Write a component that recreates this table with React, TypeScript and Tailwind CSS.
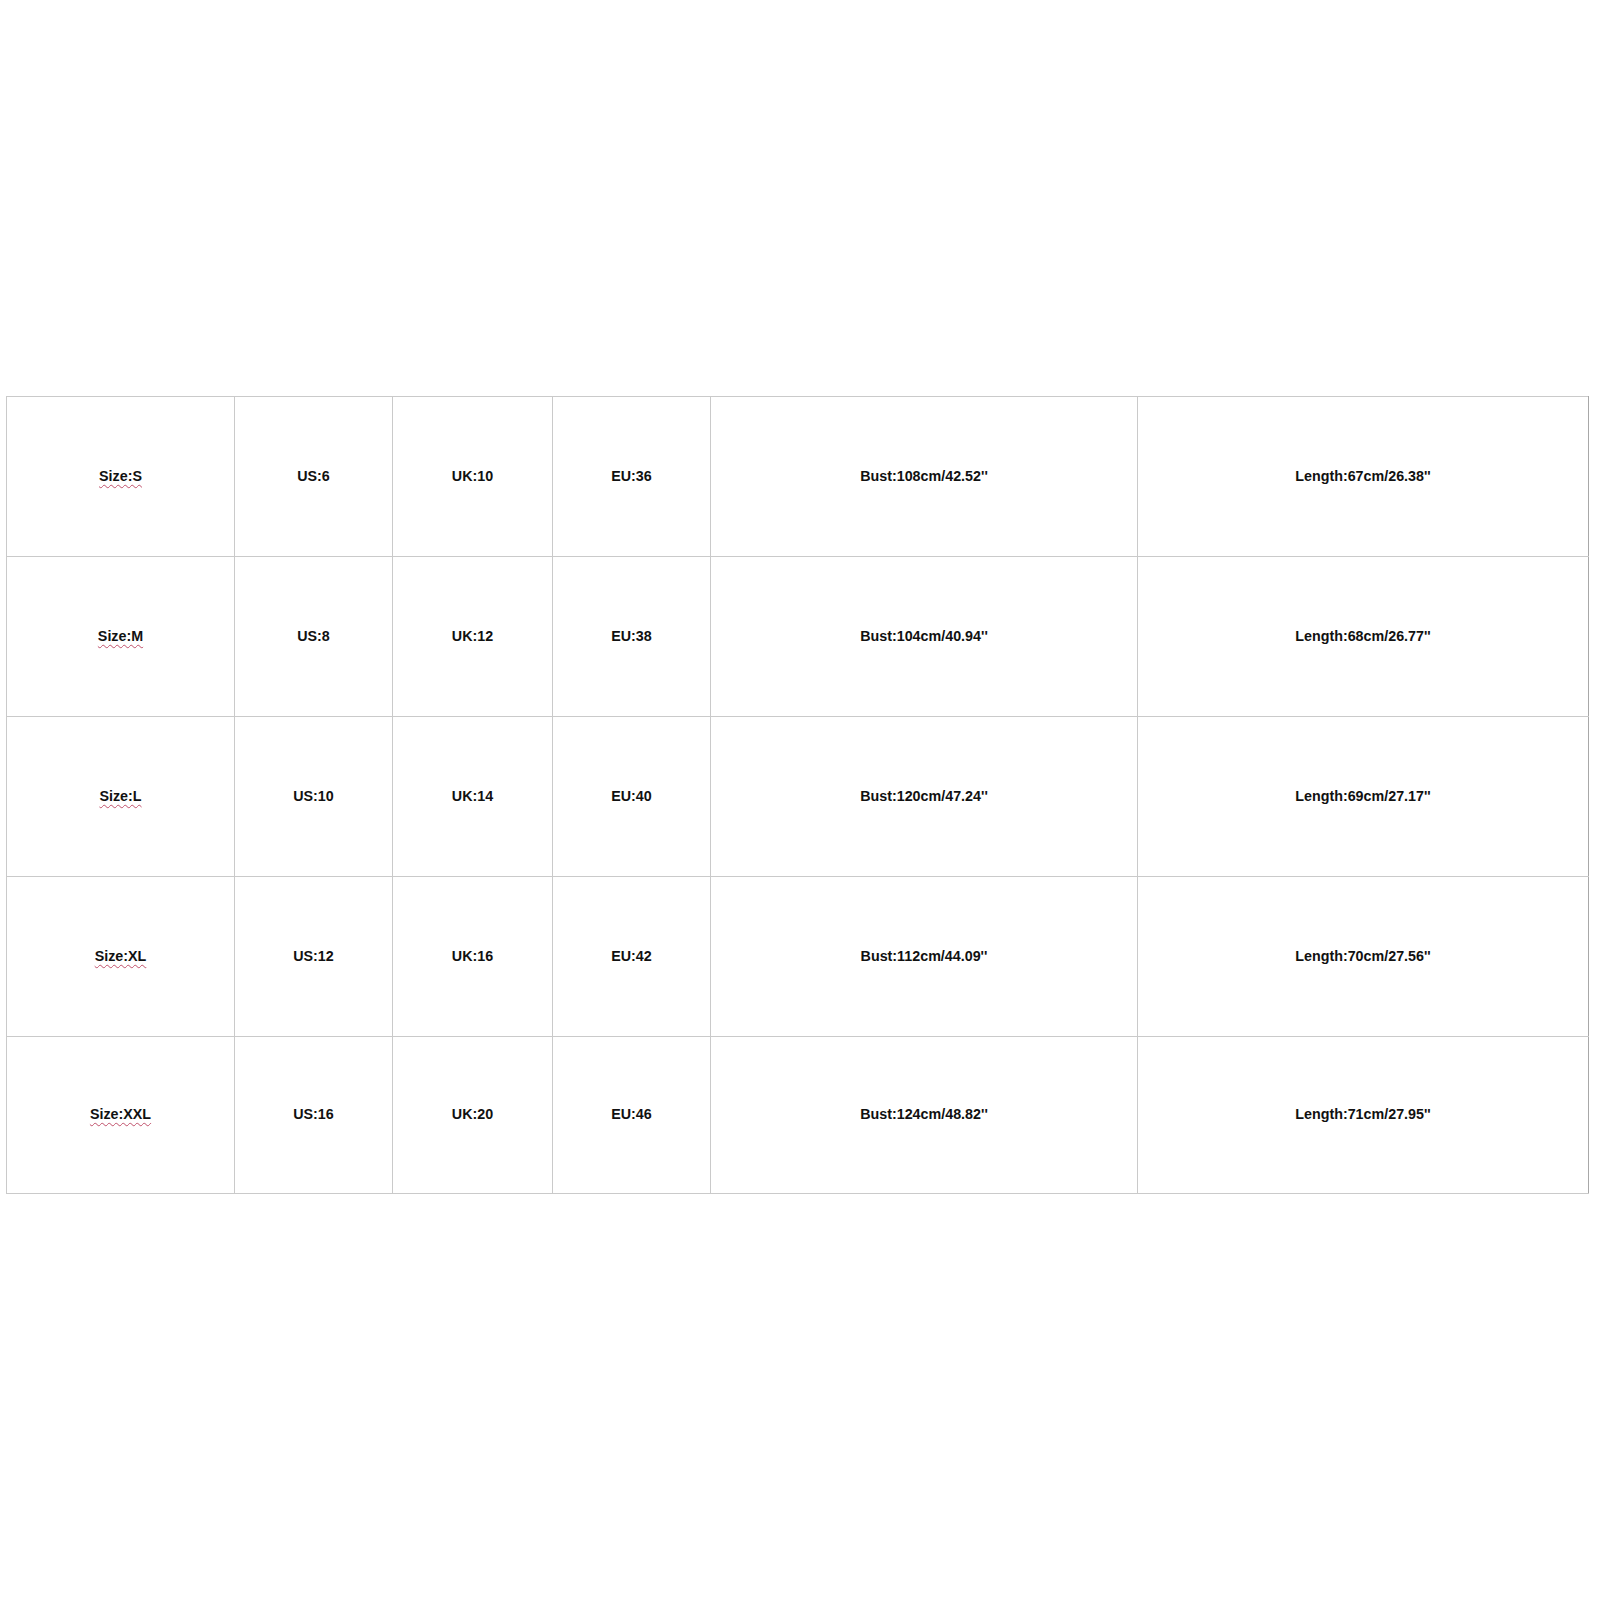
import React from "react";

// --- Size chart rows ---
type Row = { size: string; us: string; uk: string; eu: string; bust: string; length: string };

const rows: Row[] = [
  { size: "Size:S", us: "US:6", uk: "UK:10", eu: "EU:36", bust: "Bust:108cm/42.52''", length: "Length:67cm/26.38''" },
  { size: "Size:M", us: "US:8", uk: "UK:12", eu: "EU:38", bust: "Bust:104cm/40.94''", length: "Length:68cm/26.77''" },
  { size: "Size:L", us: "US:10", uk: "UK:14", eu: "EU:40", bust: "Bust:120cm/47.24''", length: "Length:69cm/27.17''" },
  { size: "Size:XL", us: "US:12", uk: "UK:16", eu: "EU:42", bust: "Bust:112cm/44.09''", length: "Length:70cm/27.56''" },
  { size: "Size:XXL", us: "US:16", uk: "UK:20", eu: "EU:46", bust: "Bust:124cm/48.82''", length: "Length:71cm/27.95''" },
];

const cell = "border border-[#cacaca] text-center align-middle p-0";

const App: React.FC = () => {
  return (
    <div className="w-[1600px] h-[1600px] bg-white pt-[396px] pl-[6px] font-['Liberation_Sans',Arial,sans-serif] text-[14.3px] font-bold text-[#111]">
      <table className="table-fixed border-collapse w-[1582px] border-r border-b border-r-[#a8a8a8] border-b-[#a8a8a8]">
        <colgroup>
          <col className="w-[228px]" />
          <col className="w-[158px]" />
          <col className="w-[160px]" />
          <col className="w-[158px]" />
          <col className="w-[427px]" />
          <col className="w-[451px]" />
        </colgroup>
        <tbody>
          {rows.map((r, i) => (
            <tr key={r.size} className={i === rows.length - 1 ? "h-[157px]" : "h-[160px]"}>
              <td className={cell}>
                <span className="underline decoration-wavy decoration-[#c0506a] decoration-1 underline-offset-[3px]">
                  {r.size}
                </span>
              </td>
              <td className={cell}>{r.us}</td>
              <td className={cell}>{r.uk}</td>
              <td className={cell}>{r.eu}</td>
              <td className={cell}>{r.bust}</td>
              <td className={cell + " border-r-[#a8a8a8]"}>{r.length}</td>
            </tr>
          ))}
        </tbody>
      </table>
    </div>
  );
};

export default App;
